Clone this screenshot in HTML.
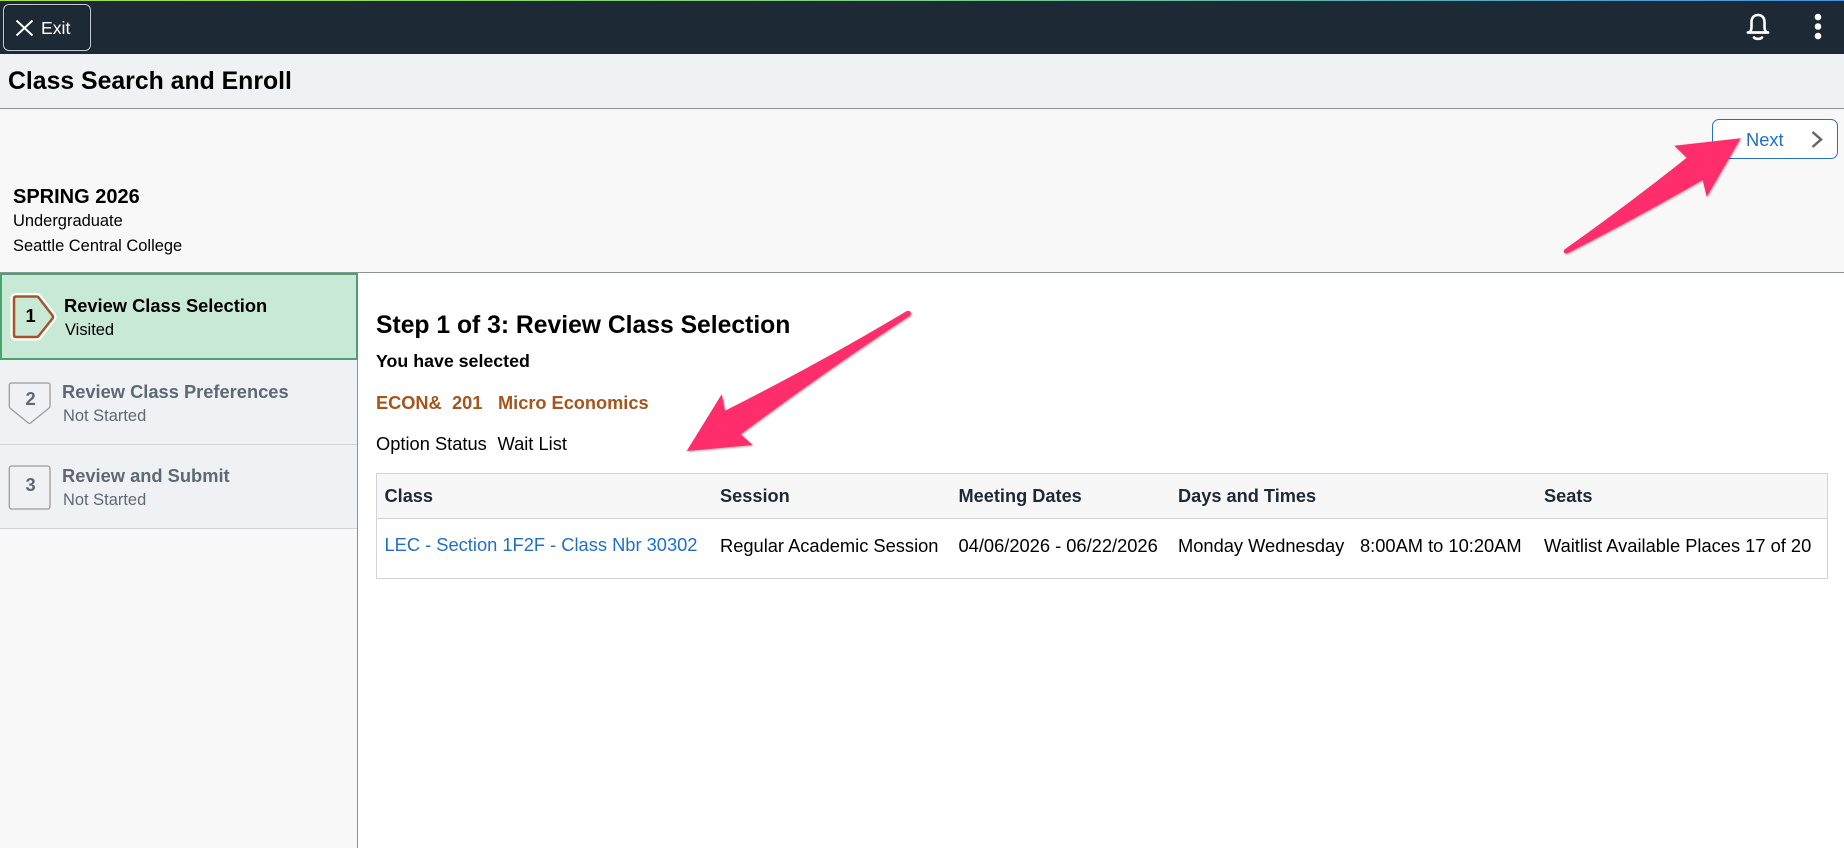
<!DOCTYPE html>
<html><head><meta charset="utf-8"><title>Class Search and Enroll</title>
<style>
html,body{margin:0;padding:0;width:1844px;height:848px;overflow:hidden;background:#fff;font-family:"Liberation Sans",Arial,sans-serif;color:#000}
.b{position:absolute}
.t{position:absolute;white-space:nowrap;line-height:30px;height:30px}
.bd{font-weight:bold}
.s{font-size:16.47px}
.m{font-size:18.3px}
.g{color:#5f6972}
.h{font-size:18.2px;font-weight:bold;color:#1e2936}
</style></head><body>
<div class="b" style="left:0;top:0;width:1844px;height:54px;background:#1e2936"></div>
<div class="b" style="left:0;top:0;width:1844px;height:1px;background:linear-gradient(90deg,#a4e22e 0%,#78d08c 50%,#3f93e8 100%)"></div>
<div class="b" style="left:3px;top:4px;width:86px;height:45px;border:1px solid #c6ccd3;border-radius:6px;box-shadow:inset 0 0 0 1px #18212c"></div>
<svg class="b" style="left:14px;top:18px" width="22" height="20"><path d="M2.5 2.5L18.5 17.5M18.5 2.5L2.5 17.5" stroke="#fff" stroke-width="1.9" fill="none"/></svg>
<div class="t" style="left:41px;top:13px;font-size:17.6px;color:#fff">Exit</div>
<svg class="b" style="left:1744px;top:12px" width="28" height="30" fill="none"><path d="M5.500 20.500c1.500-1.500 2-3 2-5.500V10C7.500 5.500 10.300 3 14 3s6.500 2.500 6.500 7v5c0 2.500.5 4 2 5.500" stroke="#fff" stroke-width="2.600" stroke-linejoin="round"/><path d="M4 20.500H24" stroke="#fff" stroke-width="2.800" stroke-linecap="round"/><path d="M10 25.500c1.500 1.800 6.500 1.800 8 0" stroke="#fff" stroke-width="2.600" stroke-linecap="round"/></svg>
<svg class="b" style="left:1810px;top:10px" width="16" height="34" fill="#fff"><circle cx="8" cy="7" r="3.300"/><circle cx="8" cy="16.500" r="3.300"/><circle cx="8" cy="26" r="3.300"/></svg>

<div class="b" style="left:0;top:54px;width:1844px;height:54px;background:#f0f1f5;border-bottom:1px solid #8b929c"></div>
<div class="t bd" style="left:8px;top:67px;font-size:24.8px">Class Search and Enroll</div>

<div class="b" style="left:0;top:109px;width:1844px;height:163px;background:#f8f8f8;border-bottom:1px solid #8b929c"></div>
<div class="t bd" style="left:13px;top:182px;font-size:20px">SPRING 2026</div>
<div class="t s" style="left:13px;top:206px">Undergraduate</div>
<div class="t s" style="left:13px;top:231px">Seattle Central College</div>

<div class="b" style="left:1712px;top:119px;width:124px;height:38px;background:#fff;border:1px solid #2a6fc4;border-radius:7px"></div>
<div class="t" style="left:1746px;top:125px;font-size:18.3px;color:#1f6fc9">Next</div>
<svg class="b" style="left:1808px;top:128px" width="18" height="23" fill="none"><path d="M4.500 4L13 11.500L4.500 19" stroke="#666" stroke-width="2.500"/></svg>

<!-- sidebar -->
<div class="b" style="left:0;top:273px;width:357px;height:575px;background:#f8f8f8;border-right:1px solid #8b929c"></div>
<div class="b" style="left:0;top:273px;width:357px;height:255px;background:#f0f1f5"></div>
<div class="b" style="left:0;top:444px;width:357px;height:1px;background:#d0d3d9"></div>
<div class="b" style="left:0;top:528px;width:357px;height:1px;background:#d0d3d9"></div>
<div class="b" style="left:0;top:273px;width:354px;height:83px;background:#c9e9d7;border:2px solid #4aa36f"></div>

<svg class="b" style="left:0;top:280px" width="70" height="240" fill="none">
<path d="M16 16.500H36.500Q38 16.500 39 18L52.500 35.500Q53.500 37 52.500 38.500L39 55.500Q38 57 36.500 57H16Q14 57 14 55V18.500Q14 16.500 16 16.500z" stroke="#fff" stroke-width="7" stroke-linejoin="round"/>
<path d="M16 16.500H36.500Q38 16.500 39 18L52.500 35.500Q53.500 37 52.500 38.500L39 55.500Q38 57 36.500 57H16Q14 57 14 55V18.500Q14 16.500 16 16.500z" fill="#c9e9d7" stroke="#a5532a" stroke-width="2.500"/>
<path d="M11.500 103H47.800Q50 103 50 105.200V126Q50 127.500 48.800 128.300L30.500 143Q29.400 143.800 28.300 143L10.200 128.300Q9.300 127.500 9.300 126V105.200Q9.300 103 11.500 103z" fill="#f0f1f5" stroke="#a09b96" stroke-width="1.300"/>
<rect x="9.300" y="186" width="40.700" height="43" rx="2.500" fill="#f0f1f5" stroke="#a09b96" stroke-width="1.300"/>
</svg>
<div class="t bd" style="left:25.5px;top:301px;font-size:18.3px">1</div>
<div class="t bd g" style="left:25.5px;top:384px;font-size:18.3px">2</div>
<div class="t bd g" style="left:25.5px;top:470px;font-size:18.3px">3</div>

<div class="t bd m" style="left:64px;top:291px">Review Class Selection</div>
<div class="t s" style="left:65px;top:315px">Visited</div>
<div class="t bd m g" style="left:62px;top:377px">Review Class Preferences</div>
<div class="t s g" style="left:63px;top:401px">Not Started</div>
<div class="t bd m g" style="left:62px;top:461px">Review and Submit</div>
<div class="t s g" style="left:63px;top:485px">Not Started</div>

<!-- main -->
<div class="t bd" style="left:376px;top:311px;font-size:24.7px">Step 1 of 3: Review Class Selection</div>
<div class="t bd" style="left:376px;top:346px;font-size:17.8px">You have selected</div>
<div class="t bd" style="left:376px;top:388px;font-size:18.2px;color:#a5541b">ECON&amp;</div>
<div class="t bd" style="left:452px;top:388px;font-size:18.2px;color:#a5541b">201</div>
<div class="t bd" style="left:498px;top:388px;font-size:18.2px;color:#a5541b">Micro Economics</div>
<div class="t m" style="left:376px;top:429px">Option Status</div>
<div class="t m" style="left:497.5px;top:429px">Wait List</div>

<div class="b" style="left:376px;top:473px;width:1450px;height:104px;border:1px solid #d0d4da;background:#fff"></div>
<div class="b" style="left:377px;top:474px;width:1450px;height:44px;background:#f7f7f7;border-bottom:1px solid #d0d4da"></div>
<div class="t h" style="left:384.5px;top:481px">Class</div>
<div class="t h" style="left:720px;top:481px">Session</div>
<div class="t h" style="left:958.5px;top:481px">Meeting Dates</div>
<div class="t h" style="left:1178px;top:481px">Days and Times</div>
<div class="t h" style="left:1544px;top:481px">Seats</div>
<div class="t m" style="left:384.5px;top:530px;color:#1f6fc9">LEC - Section 1F2F - Class Nbr 30302</div>
<div class="t m" style="left:720px;top:531px">Regular Academic Session</div>
<div class="t m" style="left:958.5px;top:531px">04/06/2026 - 06/22/2026</div>
<div class="t m" style="left:1178px;top:531px">Monday Wednesday</div>
<div class="t m" style="left:1360px;top:531px">8:00AM to 10:20AM</div>
<div class="t m" style="left:1544px;top:531px">Waitlist Available Places 17 of 20</div>

<!-- arrows -->
<svg class="b" style="left:0;top:0;filter:drop-shadow(1px 1.5px 1px rgba(0,0,0,.35))" width="1844" height="848">
<path d="M1740.7 138.3L1674.3 145.7L1686.7 157.700Q1630 203 1564.500 249.500Q1563 251.500 1564.500 253Q1566 254 1568 253Q1640 216 1702.700 180L1706.700 196.700z" fill="#ff2d6b"/>
<path d="M686.700 451L721.700 394.300L725 410.700Q820 363 906 311.500Q909 310 910.500 312Q911.500 314.500 909.500 316Q820 375 740.700 434.300L752.700 445z" fill="#ff2d6b"/>
</svg>
</body></html>
